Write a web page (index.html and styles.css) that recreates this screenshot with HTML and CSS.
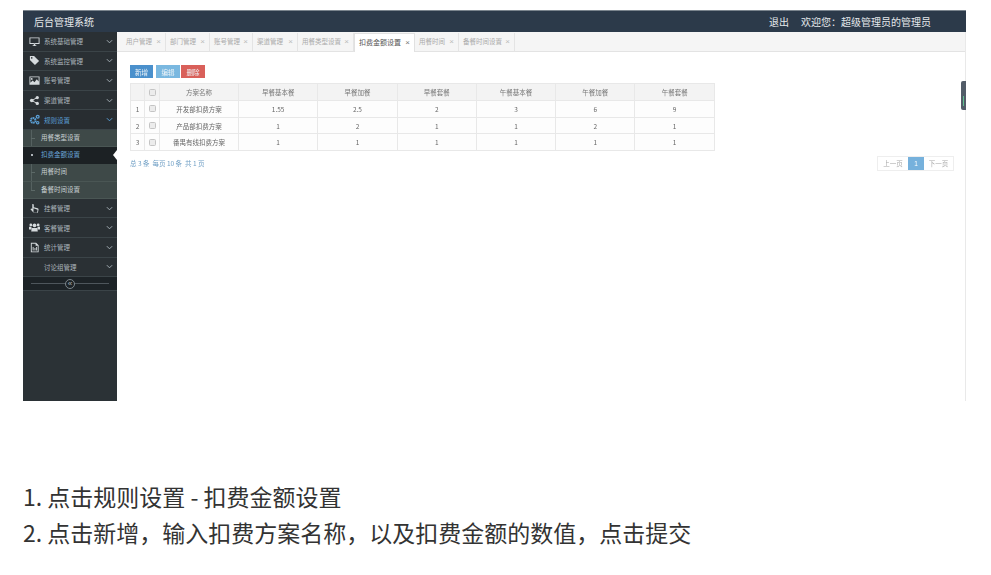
FILE: index.html
```html
<!DOCTYPE html>
<html lang="zh">
<head>
<meta charset="utf-8">
<title>后台管理系统</title>
<link rel="stylesheet" href="styles.css">
</head>
<body>
<div class="shot">
  <header class="top">
    <div class="brand">后台管理系统</div>
    <div class="user"><span class="logout">退出</span><span>欢迎您：超级管理员的管理员</span></div>
  </header>
  <div class="main">
    <nav class="side">
      <div class="item"><svg class="ico" viewBox="0 0 12 12"><path d="M.5 1.500h11v7.200H.5zM1.500 2.500v5.200h9V2.500zM4 10h4v1H4zM5.200 8.500h1.600V10H5.200z" fill-rule="evenodd"/></svg><span class="lbl">系统基础管理</span><svg class="chev" viewBox="0 0 8 5"><path d="M1 1l3 3 3-3"/></svg></div>
      <div class="item"><svg class="ico" viewBox="0 0 12 12"><path d="M1 1h4.500l5.500 5.500L6.500 11 1 5.500zM3 2.300a.9.9 0 100 1.800.9.9 0 000-1.800z" fill-rule="evenodd"/></svg><span class="lbl">系统监控管理</span><svg class="chev" viewBox="0 0 8 5"><path d="M1 1l3 3 3-3"/></svg></div>
      <div class="item"><svg class="ico" viewBox="0 0 12 12"><path d="M.5 1.500h11v9H.5zM1.500 2.500v6l2.500-2.500 2 2 2.500-3.500 2 2.500v-4.500zM3 3.300a1 1 0 100 2 1 1 0 000-2z" fill-rule="evenodd"/></svg><span class="lbl">账号管理</span><svg class="chev" viewBox="0 0 8 5"><path d="M1 1l3 3 3-3"/></svg></div>
      <div class="item"><svg class="ico" viewBox="0 0 12 12"><circle cx="3" cy="6" r="2"/><circle cx="9" cy="2.800" r="1.800"/><circle cx="9" cy="9.200" r="1.800"/><path d="M3 6l6-3.200M3 6l6 3.200" stroke="currentColor" fill="none"/></svg><span class="lbl">渠道管理</span><svg class="chev" viewBox="0 0 8 5"><path d="M1 1l3 3 3-3"/></svg></div>
      <div class="item open"><svg class="ico" viewBox="0 0 12 12"><circle cx="4.500" cy="7" r="2.600" fill="none" stroke="currentColor" stroke-width="2.200" stroke-dasharray="1.600 .5"/><circle cx="9.500" cy="3" r="1.500" fill="none" stroke="currentColor" stroke-width="1.400"/><circle cx="9.500" cy="9.500" r="1.300" fill="none" stroke="currentColor" stroke-width="1.300"/></svg><span class="lbl">规则设置</span><svg class="chev" viewBox="0 0 8 5"><path d="M1 1l3 3 3-3"/></svg></div>
      <div class="sub">
        <div class="subitem">用餐类型设置</div>
        <div class="subitem current">扣费金额设置</div>
        <div class="subitem">用餐时间</div>
        <div class="subitem">备餐时间设置</div>
      </div>
      <div class="item"><svg class="ico" viewBox="0 0 12 12"><path d="M4 1.200c.8 0 1.200.6 1.200 1.200v2.300l4.300 1c.7.2 1 .7.9 1.300l-.6 3.200c-.1.5-.5.8-1 .8H5.200L1.600 6.800l.8-.8 1.200.6V2.400c0-.6-.1-1.200.4-1.200zM4.900 5.600v4.900h3.900l.6-3.200z" fill-rule="evenodd"/></svg><span class="lbl">挂餐管理</span><svg class="chev" viewBox="0 0 8 5"><path d="M1 1l3 3 3-3"/></svg></div>
      <div class="item"><svg class="ico" viewBox="0 0 12 12"><circle cx="6" cy="3.600" r="2"/><circle cx="2" cy="3.200" r="1.500"/><circle cx="10" cy="3.200" r="1.500"/><path d="M3 6.500h6l.6 3.800H2.400zM0 5.200h2.800l-.3 3H0zM9.200 5.200H12v3H9.500z"/></svg><span class="lbl">客餐管理</span><svg class="chev" viewBox="0 0 8 5"><path d="M1 1l3 3 3-3"/></svg></div>
      <div class="item"><svg class="ico" viewBox="0 0 12 12"><path d="M2 .8h5.800L10.500 3.500v7.800H2zM3 1.800v8.500h6.500V4.200H7.200V1.800zM4 5.500h1v3.700H4zM6 6.500h1v2.700H6zM7.800 5.500h.9v3.700h-.9z" fill-rule="evenodd"/></svg><span class="lbl">统计管理</span><svg class="chev" viewBox="0 0 8 5"><path d="M1 1l3 3 3-3"/></svg></div>
      <div class="item"><span class="ico"></span><span class="lbl">讨论组管理</span><svg class="chev" viewBox="0 0 8 5"><path d="M1 1l3 3 3-3"/></svg></div>
      <div class="collapse"><span class="toggle">«</span></div>
    </nav>
    <section class="content">
      <div class="tabs">
        <div class="tab t44">用户管理<i>×</i></div>
        <div class="tab t44">部门管理<i>×</i></div>
        <div class="tab t43">账号管理<i>×</i></div>
        <div class="tab t45">渠道管理<i>×</i></div>
        <div class="tab t56">用餐类型设置<i>×</i></div>
        <div class="tab active">扣费金额设置<i>×</i></div>
        <div class="tab t44">用餐时间<i>×</i></div>
        <div class="tab t56">备餐时间设置<i>×</i></div>
      </div>
      <div class="panel">
        <div class="tools">
          <button class="btn add">新增</button><button class="btn edit">编辑</button><button class="btn del">删除</button>
        </div>
        <table class="grid">
          <thead>
            <tr><th class="c-n"></th><th class="c-c"><span class="box"></span></th><th class="c-m">方案名称</th><th class="c-v">早餐基本餐</th><th class="c-v">早餐加餐</th><th class="c-v">早餐套餐</th><th class="c-v">午餐基本餐</th><th class="c-v">午餐加餐</th><th class="c-v">午餐套餐</th></tr>
          </thead>
          <tbody>
            <tr><td>1</td><td><span class="box"></span></td><td>开发部扣费方案</td><td>1.55</td><td>2.5</td><td>2</td><td>3</td><td>6</td><td>9</td></tr>
            <tr><td>2</td><td><span class="box"></span></td><td>产品部扣费方案</td><td>1</td><td>2</td><td>1</td><td>1</td><td>2</td><td>1</td></tr>
            <tr><td>3</td><td><span class="box"></span></td><td>番禺有线扣费方案</td><td>1</td><td>1</td><td>1</td><td>1</td><td>1</td><td>1</td></tr>
          </tbody>
        </table>
        <div class="foot">
          <div class="count">总 3 条&nbsp; 每页 10 条&nbsp; 共 1 页</div>
          <div class="pager"><span class="pg">上一页</span><span class="pg on">1</span><span class="pg">下一页</span></div>
        </div>
      </div>
      <div class="handle"></div>
    </section>
  </div>
</div>
<div class="notes">
  <p>1. 点击规则设置 - 扣费金额设置</p>
  <p>2. 点击新增，输入扣费方案名称，以及扣费金额的数值，点击提交</p>
</div>
</body>
</html>
```
FILE: styles.css
```css
* { box-sizing: border-box; }
html, body { margin: 0; padding: 0; background: #fff; }
body { font-family: "Liberation Sans", "Noto Sans CJK SC", sans-serif; overflow: hidden; }

.shot {
  width: 943px; height: 391px; margin: 10px 0 0 23px;
  display: flex; flex-direction: column;
  filter: blur(.45px);
}
.top {
  height: 22px; background: #2c3a4a; color: #e4e8ea;
  border-top: 1px solid #7b858e;
  display: flex; justify-content: space-between; align-items: center;
  padding: 0 35px 0 11px; font-size: 10px;
  font-family: "Noto Sans CJK SC", sans-serif;
}
.logout { margin-right: 12px; }
.main { flex: 1; display: flex; min-height: 0; }

.side { width: 94px; background: #2b3236; display: flex; flex-direction: column; }
.item {
  height: 19.6px; display: flex; align-items: center;
  border-bottom: 1px solid #3b4448; color: #aab4ba;
  font-size: 6.5px; padding: 0 4px 0 6px;
  background: #2a3034;
}
.item.open { color: #5b9fd6; background: #282d31; }
.ico { width: 11px; height: 11px; fill: #d5dadd; flex: none; margin-right: 4px; color: #d5dadd; display: block; }
.open .ico { fill: #5b9fd6; color: #5b9fd6; }
.lbl { flex: 1; white-space: nowrap; }
.chev { width: 7px; height: 5px; fill: none; stroke: #a5b0b6; stroke-width: 1.1; flex: none; }
.open .chev { stroke: #5b9fd6; }

.sub { background: #3e4948; position: relative; }
.sub::before {
  content: ""; position: absolute; left: 8px; top: 0; bottom: 9px; width: 1px; background: #556160;
}
.subitem {
  height: 17.2px; line-height: 16px; padding-left: 18px;
  font-size: 6.5px; color: #c8d0d2;
  border-bottom: 1px solid #4a5654; position: relative;
}
.subitem::before {
  content: ""; position: absolute; left: 8px; top: 8px;
  width: 4px; height: 1px; background: #5c6967;
}
.subitem.current { background: #1c2124; color: #6ba7da; border-bottom-color: #1c2124; }
.subitem.current::before { width: 2px; height: 2px; left: 8px; top: 7px; border-radius: 50%; background: #dfe6ea; }
.subitem.current::after {
  content: ""; position: absolute; right: 0; top: 3px;
  border: 5px solid transparent; border-right-color: #fff; border-left-width: 0; border-right-width: 4px;
}
.collapse {
  height: 14px; background: #1d2327; border-bottom: 1px solid #3b4448; position: relative;
  display: flex; align-items: center; justify-content: center;
}
.collapse::before {
  content: ""; position: absolute; left: 8px; right: 8px; top: 6px; height: 1px; background: #4e565c;
}
.toggle {
  width: 10px; height: 10px; border: 1px solid #7c868c; border-radius: 50%;
  background: #1d2327; color: #aab3b8; font-size: 8px; line-height: 7px; text-align: center;
  position: relative;
}

.content { flex: 1; position: relative; border-right: 1px solid #e9e9e9; display: flex; flex-direction: column; min-width: 0; }
.tabs {
  height: 20px; background: #f5f5f5; border-bottom: 1px solid #e3e3e3;
  display: flex; padding: 1px 0 0 5px; font-size: 6.5px; color: #aaa;
}
.tab {
  height: 19px; line-height: 18px; padding-left: 4px; white-space: nowrap;
  border-right: 1px solid #e4e4e4; display: flex; justify-content: space-between; padding-right: 4px;
}
.tab i { font-style: normal; font-size: 8px; color: #bbb; }
.t44 { width: 44px; } .t43 { width: 43px; } .t45 { width: 45px; } .t56 { width: 56px; }
.tab.active {
  width: 61px; background: #fff; color: #555; font-size: 7px;
  border: 1px solid #e1e1e1; border-bottom: 0; height: 19px;
}
.tab.active i { color: #777; }

.panel { padding: 13px 11px 0 13px; flex: 1; }
.tools { display: flex; height: 13px; margin-bottom: 5px; }
.btn {
  border: 0; padding: 0; height: 13px; color: #eef4f8; font: 6.5px "Noto Sans CJK SC", sans-serif;
}
.add { width: 23px; background: #4a90cc; margin-right: 3px; }
.edit { width: 24px; background: #7ab8e0; margin-right: 1px; }
.del { width: 24px; background: #d9605a; }

.grid { border-collapse: collapse; table-layout: fixed; width: 584px; font-size: 6.5px; color: #666; font-family: "Noto Sans CJK SC", sans-serif; }
.grid th, .grid td { border: 1px solid #e8e8e8; text-align: center; padding: 0; overflow: hidden; white-space: nowrap; }
.grid th { height: 17px; background: #f3f3f3; font-weight: 400; color: #777; }
.grid td { height: 16.7px; background: #fdfdfd; }
.c-n { width: 14px; } .c-c { width: 15px; } .c-m { width: 79px; } .c-v { width: 79.300px; }
.box { display: block; width: 7px; height: 7px; margin: 0 auto; border: 1px solid #c4c4c4; border-radius: 1.500px; background: #ececec; }

.foot { display: flex; justify-content: space-between; align-items: flex-start; margin-top: 5px; }
.count { font-size: 6.5px; color: #6f9fc5; margin-top: 2px; font-family: "Noto Sans CJK SC", sans-serif; }
.pager { display: flex; height: 15px; border: 1px solid #eee; font-size: 6.5px; color: #aaa; }
.pg { width: 30px; text-align: center; line-height: 13px; }
.pg.on { width: 16px; background: #76b1dc; color: #fff; }
.pg:last-child { width: 29px; border-left: 0; }

.handle {
  position: absolute; right: -1px; top: 49px; width: 5px; height: 29px;
  background: #525c68; border-radius: 2px 0 0 2px;
}
.handle::after { content: ""; position: absolute; left: 2px; top: 15px; width: 1px; height: 10px; background: #5fbf8f; }

.notes { margin: 77px 0 0 23px; font-family: "Noto Sans CJK SC", sans-serif; font-size: 23px; font-weight: 400; color: #333; }
.notes p { margin: 0; height: 36px; line-height: 36px; white-space: nowrap; }
```
